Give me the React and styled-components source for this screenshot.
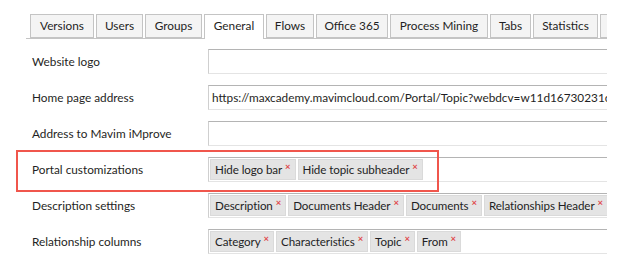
import React from "react";
import styled, { createGlobalStyle } from "styled-components";

const GlobalStyle = createGlobalStyle`
  body {
    margin: 0;
    background: #ffffff;
    font-family: Lato, "Open Sans", sans-serif;
    color: #1f1f24;
  }
`;

// tab widths taken from the screenshot
const tabs = [
  { name: "Versions", w: 64 },
  { name: "Users", w: 47 },
  { name: "Groups", w: 57 },
  { name: "General", w: 60 },
  { name: "Flows", w: 48 },
  { name: "Office 365", w: 72 },
  { name: "Process Mining", w: 98 },
  { name: "Tabs", w: 41 },
  { name: "Statistics", w: 65 },
  { name: "", w: 70 },
];

const rows = [
  { label: "Website logo" },
  { label: "Home page address", text: "https://maxcademy.mavimcloud.com/Portal/Topic?webdcv=w11d16730231c" },
  { label: "Address to Mavim iMprove" },
  { label: "Portal customizations", chips: ["Hide logo bar", "Hide topic subheader"] },
  { label: "Description settings", chips: ["Description", "Documents Header", "Documents", "Relationships Header", "Relationships"] },
  { label: "Relationship columns", chips: ["Category", "Characteristics", "Topic", "From"] },
];

const Page = styled.div`
  position: relative;
  width: 607px;
  height: 262px;
  overflow: hidden;
  padding-top: 14px;
  box-sizing: border-box;
`;

const TabBar = styled.div`
  display: flex;
  gap: 2px;
  margin-left: 26px;
  padding-left: 4px;
  border-bottom: 1px solid #c4c4c4;
  height: 24px;
`;

const Tab = styled.div`
  flex: none;
  width: ${(p) => p.$w}px;
  height: ${(p) => (p.$active ? "25px" : "24px")};
  box-sizing: border-box;
  border: 1px solid #c4c4c4;
  border-bottom: ${(p) => (p.$active ? "none" : "1px solid #c4c4c4")};
  background: ${(p) => (p.$active ? "#ffffff" : "#f4f4f4")};
  font-size: 11.8px;
  line-height: 22px;
  text-align: center;
  white-space: nowrap;
  overflow: hidden;
  color: #1f1f24;
`;

const Form = styled.div`
  display: flex;
  flex-direction: column;
  gap: 11px;
  padding: 10px 0 0 32px;
`;

const Row = styled.div`
  display: flex;
  align-items: center;
  height: 25px;
`;

const Label = styled.div`
  width: 176px;
  flex: none;
  font-size: 11.8px;
  color: #1f1f24;
`;

const Field = styled.div`
  flex: 1;
  height: 25px;
  box-sizing: border-box;
  border-top: 1px solid #b4b4b4;
  border-left: 1px solid #cfcfcf;
  border-bottom: 1px solid #e4e4e4;
  display: flex;
  align-items: center;
  gap: 2px;
  padding-left: 1px;
  white-space: nowrap;
  overflow: hidden;
`;

const FieldText = styled.span`
  font-size: 11.8px;
  padding-left: 2px;
  color: #1f1f24;
`;

const Chip = styled.span`
  flex: none;
  display: inline-flex;
  align-items: center;
  gap: 3px;
  height: 21px;
  padding: 0 4px 0 4px;
  box-sizing: border-box;
  background: #e4e4e4;
  border: 1px solid #dadada;
  font-size: 11.6px;
  letter-spacing: -0.1px;
  color: #1f1f24;
`;

const Remove = styled.span`
  color: #e0484a;
  font-size: 9.5px;
  font-weight: 700;
  position: relative;
  top: -3px;
`;

const Highlight = styled.div`
  position: absolute;
  left: 16px;
  top: 150px;
  width: 423px;
  height: 42px;
  box-sizing: border-box;
  border: 2px solid #f0564c;
  pointer-events: none;
`;

export default function App() {
  return (
    <>
      <GlobalStyle />
      <Page>
        <TabBar>
          {tabs.map((t, i) => (
            <Tab key={i} $w={t.w} $active={t.name === "General"}>
              {t.name}
            </Tab>
          ))}
        </TabBar>
        <Form>
          {rows.map((r) => (
            <Row key={r.label}>
              <Label>{r.label}</Label>
              <Field>
                {r.text && <FieldText>{r.text}</FieldText>}
                {r.chips &&
                  r.chips.map((c) => (
                    <Chip key={c}>
                      {c}
                      <Remove>×</Remove>
                    </Chip>
                  ))}
              </Field>
            </Row>
          ))}
        </Form>
        <Highlight />
      </Page>
    </>
  );
}
